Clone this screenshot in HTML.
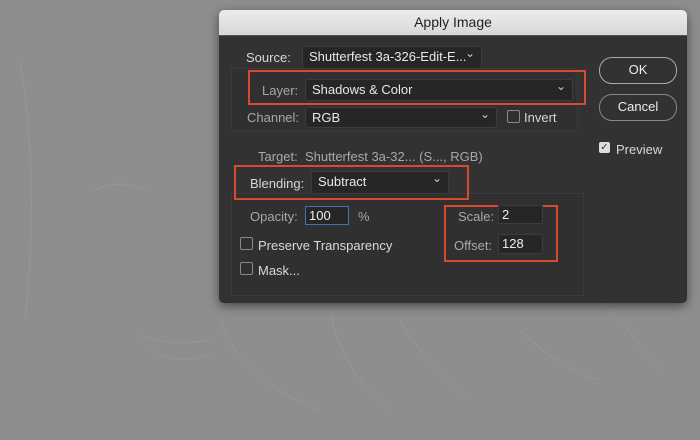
<!DOCTYPE html><html><head><style>
body{margin:0;width:700px;height:440px;overflow:hidden;background:#8e8e8e;font-family:"Liberation Sans",sans-serif;position:relative}
.a{position:absolute}
.dlg{left:219px;top:10px;width:468px;height:293px;background:#323232;border-radius:5px;box-shadow:0 3px 10px rgba(0,0,0,.5);overflow:hidden}
.tb{left:0;top:0;width:468px;height:25px;background:linear-gradient(#ececec,#d8d8d8);color:#222;font-size:14px;text-align:center;line-height:25px;border-bottom:1px solid #555}
.t{color:#d8d8d8;font-size:13px;white-space:nowrap}
.l{color:#a8a8a8;font-size:13px;white-space:nowrap}
.sel{background:#262626;border:1px solid #3c3c3c;border-radius:3px;color:#e8e8e8;font-size:13px;line-height:20px;padding-left:6px;box-sizing:border-box}
.sel:after{content:"⌄";position:absolute;right:6px;top:-4px;color:#ccc;font-size:12px}
.grp{border:1px solid #3a3a3a;background:#303030}
.red{border:2px solid #d9482f;box-sizing:border-box}
.cb{width:11px;height:11px;border:1px solid #888;border-radius:2px}
.fld{background:#262626;border:1px solid #3c3c3c;color:#eee;font-size:13px;line-height:18px;padding-left:3px;box-sizing:border-box}
.btn{border:1.5px solid #aaa;border-radius:13px;color:#eee;font-size:13px;text-align:center;box-sizing:border-box}
</style></head><body>
<svg class="a" style="left:0;top:0" width="700" height="440"><g fill="none" stroke="#a0a0a0" stroke-width="1" opacity=".45"><path d="M95 190q25-12 50 0"/><path d="M140 335q30 12 70 5"/><path d="M150 348q30 20 60 5"/><path d="M220 320q20 60 100 90"/><path d="M330 310q10 60 60 100"/><path d="M400 320q30 50 70 80"/><path d="M520 330q40 40 80 50"/><path d="M600 300q30 30 60 70"/><path d="M20 60q20 120 5 260"/></g></svg>
<div class="a dlg">
<div class="a tb">Apply Image</div>
<div class="a grp" style="left:12px;top:58px;width:345px;height:61px"></div>
<div class="a t" style="left:27px;top:40px">Source:</div>
<div class="a sel" style="left:83px;top:36px;width:180px;height:23px">Shutterfest 3a-326-Edit-E...</div>
<div class="a red" style="left:29px;top:60px;width:338px;height:35px"></div>
<div class="a l" style="left:43px;top:73px">Layer:</div>
<div class="a sel" style="left:86px;top:69px;width:268px;height:22px">Shadows &amp; Color</div>
<div class="a l" style="left:28px;top:100px">Channel:</div>
<div class="a sel" style="left:86px;top:97px;width:192px;height:21px">RGB</div>
<div class="a cb" style="left:288px;top:100px"></div>
<div class="a t" style="left:305px;top:100px">Invert</div>
<div class="a l" style="left:39px;top:139px">Target:&nbsp; Shutterfest 3a-32... (S..., RGB)</div>
<div class="a grp" style="left:12px;top:183px;width:351px;height:101px"></div>
<div class="a red" style="left:15px;top:155px;width:235px;height:35px"></div>
<div class="a t" style="left:31px;top:166px">Blending:</div>
<div class="a sel" style="left:92px;top:161px;width:138px;height:23px">Subtract</div>
<div class="a l" style="left:31px;top:199px">Opacity:</div>
<div class="a fld" style="left:86px;top:196px;width:44px;height:19px;border-color:#4a6fb0">100</div>
<div class="a l" style="left:139px;top:199px">%</div>
<div class="a red" style="left:225px;top:195px;width:114px;height:57px"></div>
<div class="a l" style="left:239px;top:199px">Scale:</div>
<div class="a fld" style="left:279px;top:195px;width:45px;height:19px">2</div>
<div class="a l" style="left:235px;top:228px">Offset:</div>
<div class="a fld" style="left:279px;top:224px;width:45px;height:20px">128</div>
<div class="a cb" style="left:21px;top:227px"></div>
<div class="a t" style="left:39px;top:228px">Preserve Transparency</div>
<div class="a cb" style="left:21px;top:252px"></div>
<div class="a t" style="left:39px;top:253px">Mask...</div>
<div class="a btn" style="left:380px;top:47px;width:78px;height:27px;line-height:24px">OK</div>
<div class="a btn" style="left:380px;top:84px;width:78px;height:27px;line-height:24px;border-color:#888">Cancel</div>
<div class="a" style="left:380px;top:132px;width:11px;height:11px;background:#ddd;border-radius:2px;color:#333;font-size:10px;line-height:11px;text-align:center">✓</div>
<div class="a t" style="left:397px;top:132px">Preview</div>
</div>
</body></html>
